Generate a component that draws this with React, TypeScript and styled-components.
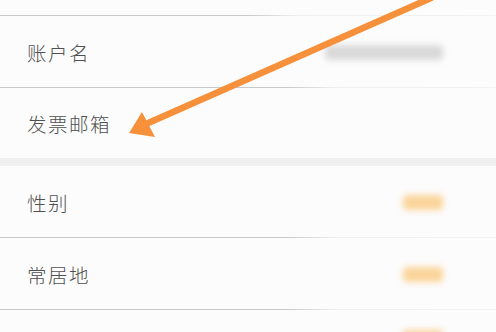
import styled, { createGlobalStyle } from 'styled-components';

const GlobalStyle = createGlobalStyle`
  html, body {
    margin: 0;
    padding: 0;
    background: #fbfbfb;
    font-family: "Noto Sans CJK SC", "Noto Sans", sans-serif;
  }
`;

const Screen = styled.div`
  position: relative;
  width: 496px;
  height: 332px;
  overflow: hidden;
  background: #fbfbfb;
  display: flex;
  flex-direction: column;
`;

const Group = styled.section`
  display: flex;
  flex-direction: column;
  background: #fcfcfc;
`;

const Gap = styled.div`
  height: 8px;
  background: #f0f0f0;
  flex-shrink: 0;
`;

const Row = styled.div<{ $h: number; $line?: boolean; $fade?: number; $top?: boolean }>`
  position: relative;
  height: ${p => p.$h}px;
  flex-shrink: 0;
  display: flex;
  align-items: ${p => (p.$top ? 'flex-start' : 'center')};
  justify-content: space-between;
  padding: 0 26px 0 27px;
  box-sizing: border-box;

  &::after {
    content: '';
    display: ${p => (p.$line ? 'block' : 'none')};
    position: absolute;
    left: 0;
    right: 0;
    bottom: 0;
    height: 1px;
    background: linear-gradient(
      to right,
      #c9c9c9 0%,
      #c9c9c9 ${p => p.$fade ?? 55}%,
      rgba(220, 220, 220, 0.4) ${p => (p.$fade ?? 55) + 10}%,
      rgba(235, 235, 235, 0.6) 100%
    );
  }
`;

const Label = styled.span`
  font-size: 19.5px;
  letter-spacing: 1.5px;
  color: #505050;
  font-weight: 300;
`;

const Value = styled.div<{ $w: number; $tone: 'gray' | 'orange'; $offset?: number }>`
  width: ${p => p.$w}px;
  height: 15px;
  border-radius: 4px;
  background: ${p => (p.$tone === 'gray' ? '#d9d9d9' : '#fbd49a')};
  filter: blur(3px);
  margin-right: 27px;
  margin-top: ${p => p.$offset ?? 0}px;
`;

const ArrowLayer = styled.svg`
  position: absolute;
  left: 0;
  top: 0;
  pointer-events: none;
`;

const Arrow = () => (
  <ArrowLayer width="496" height="332" viewBox="0 0 496 332">
    <line x1="431" y1="-2" x2="146" y2="124" stroke="#f6903a" strokeWidth="6.5" strokeLinecap="round" />
    <polygon points="129,133 142,112 155,137" fill="#f6903a" />
  </ArrowLayer>
);

export default function App() {
  return (
    <>
      <GlobalStyle />
      <Screen>
        <Group>
          <Row $h={16} $line $fade={50} />
          <Row $h={72} $line $fade={58}>
            <Label>账户名</Label>
            <Value $w={118} $tone="gray" />
          </Row>
          <Row $h={70}>
            <Label>发票邮箱</Label>
          </Row>
        </Group>
        <Gap />
        <Group>
          <Row $h={72} $line $fade={58}>
            <Label>性别</Label>
            <Value $w={40} $tone="orange" />
          </Row>
          <Row $h={72} $line $fade={58}>
            <Label>常居地</Label>
            <Value $w={40} $tone="orange" />
          </Row>
          <Row $h={30} $top>
            <span />
            <Value $w={40} $tone="orange" $offset={20} />
          </Row>
        </Group>
        <Arrow />
      </Screen>
    </>
  );
}
